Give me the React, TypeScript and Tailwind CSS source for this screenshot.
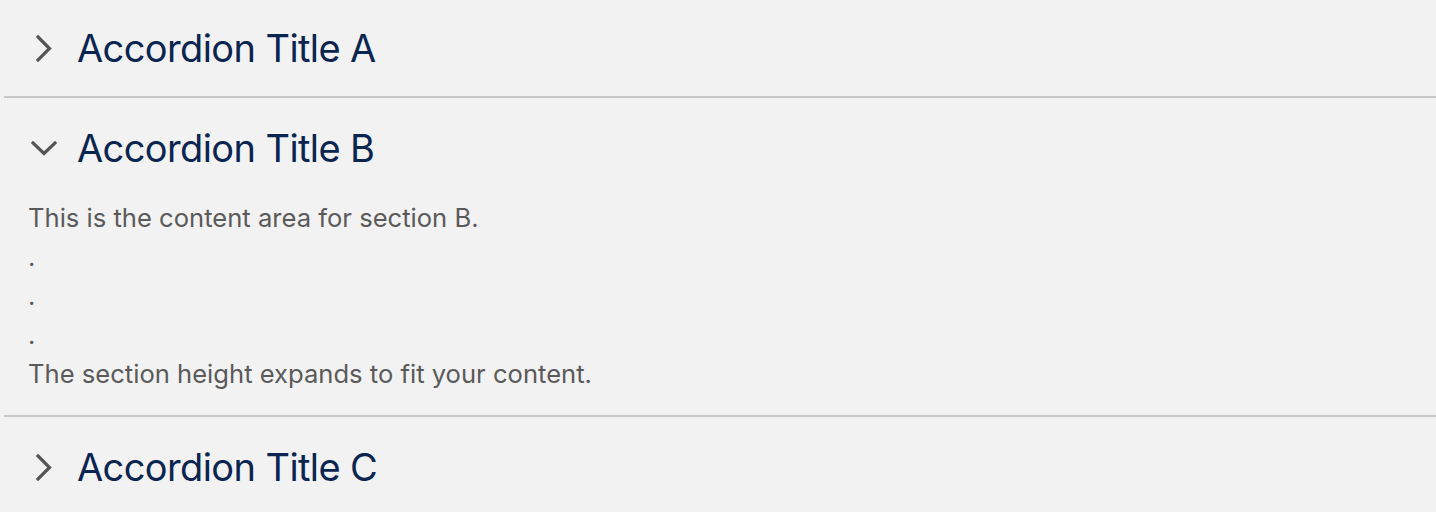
import { useState } from 'react';

interface Section {
  id: string;
  title: string;
  lines: string[];
}

const sections: Section[] = [
  { id: 'a', title: 'Accordion Title A', lines: ['Content for section A.'] },
  {
    id: 'b',
    title: 'Accordion Title B',
    lines: [
      'This is the content area for section B.',
      '.',
      '.',
      '.',
      'The section height expands to fit your content.',
    ],
  },
  { id: 'c', title: 'Accordion Title C', lines: ['Content for section C.'] },
];

function Chevron({ open }: { open: boolean }) {
  return (
    <div className="w-[26px] flex justify-center items-center">
      {open ? (
        <svg width="26" height="15" viewBox="0 0 26 15" fill="none">
          <polyline points="2,2 13,12.5 24,2" stroke="#555555" strokeWidth="3.2" strokeLinecap="square" />
        </svg>
      ) : (
        <svg width="16" height="27" viewBox="0 0 16 27" fill="none">
          <polyline points="2,2 13.5,13.5 2,25" stroke="#555555" strokeWidth="3.2" strokeLinecap="square" />
        </svg>
      )}
    </div>
  );
}

export default function App() {
  const [openId, setOpenId] = useState<string | null>('b');

  return (
    <div className="min-h-[512px] bg-[#f2f2f2] font-['Inter',sans-serif]">
      <div className="ml-[4px]">
        {sections.map((section, index) => {
          const isOpen = openId === section.id;
          return (
            <div key={section.id} className={index > 0 ? 'border-t-2 border-[#c8c8c8]' : ''}>
              <button
                onClick={() => setOpenId(isOpen ? null : section.id)}
                className={`w-full flex items-center pl-[27px] text-left ${index === 0 ? 'h-[96px]' : 'h-[100px]'}`}
              >
                <Chevron open={isOpen} />
                <span className="ml-[20px] text-[38px] tracking-[-0.6px] leading-none text-[#0b2551]">
                  {section.title}
                </span>
              </button>
              {isOpen && (
                <div className="pl-[24px] pb-[22px] text-[25.6px] leading-[39px] text-[#5a5a5a]">
                  {section.lines.map((line, i) => (
                    <p key={i}>{line}</p>
                  ))}
                </div>
              )}
            </div>
          );
        })}
      </div>
    </div>
  );
}
